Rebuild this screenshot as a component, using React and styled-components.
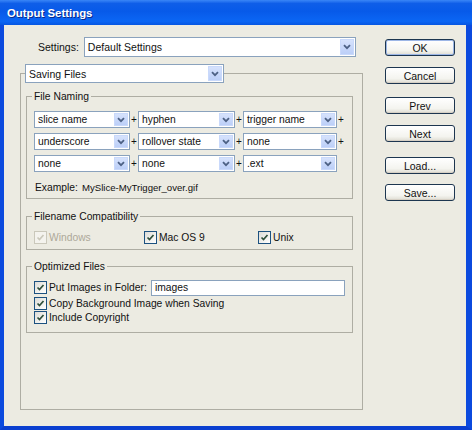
import React from 'react';
import styled, { createGlobalStyle } from 'styled-components';

const GlobalStyle = createGlobalStyle`
  html, body {
    margin: 0;
    padding: 0;
    background: #ffffff;
  }
  body {
    font-family: "Liberation Sans", Arial, sans-serif;
    font-size: 10.3px;
    font-weight: 400;
    color: #111;
  }
  * {
    font-weight: inherit;
  }
`;

const Window = styled.div`
  width: 472px;
  height: 430px;
  display: flex;
  flex-direction: column;
  overflow: hidden;
`;

const TitleBar = styled.div`
  height: 25px;
  flex: none;
  display: flex;
  align-items: center;
  padding-left: 7px;
  background: linear-gradient(#3a86f7 0%, #0f5ee8 14%, #075ae9 45%, #0b66f4 85%, #0656e2 100%);
  color: #fff;
  font-weight: 700;
  font-size: 11.4px;
  text-shadow: 1px 1px 0 #0b2a8a;
`;

const Frame = styled.div`
  flex: 1;
  display: flex;
  border-left: 4px solid #0b4ade;
  border-right: 6px solid #0b4ade;
  border-bottom: 4px solid #0a3fd0;
  background: #ecebe2;
`;

const Client = styled.div`
  flex: 1;
  display: flex;
  gap: 22px;
  padding: 12px 11px 0 16px;
`;

const LeftColumn = styled.div`
  width: 343px;
  display: flex;
  flex-direction: column;
`;

const SettingsRow = styled.div`
  display: flex;
  align-items: center;
  gap: 5px;
  padding-left: 18px;
  font-size: 10.5px;
`;

const DropBox = styled.div`
  width: ${(p) => p.$w}px;
  height: ${(p) => p.$h || 17}px;
  box-sizing: border-box;
  border: 1px solid #8aa2bd;
  background: #fff;
  display: flex;
  align-items: center;
  padding: 1px;
  font-size: ${(p) => (p.$big ? '10.5px' : '10.3px')};
`;

const DropText = styled.span`
  flex: 1;
  padding-left: 2px;
  white-space: nowrap;
  overflow: hidden;
`;

const DropArrow = styled.span`
  width: 14px;
  align-self: stretch;
  display: flex;
  align-items: center;
  justify-content: center;
  background: linear-gradient(#d6e2fc, #bccff8);
  border: 1px solid #c9d9fb;
  box-sizing: border-box;
`;

const Chevron = () => (
  <svg width="8" height="6" viewBox="0 0 8 6">
    <path d="M1 1.2 L4 4.2 L7 1.2" fill="none" stroke="#4d6185" strokeWidth="1.8" />
  </svg>
);

const Dropdown = ({ value, w, h, big }) => (
  <DropBox $w={w} $h={h} $big={big}>
    <DropText>{value}</DropText>
    <DropArrow>
      <Chevron />
    </DropArrow>
  </DropBox>
);

const OuterBox = styled.fieldset`
  margin: 7px 0 0 0;
  height: 346px;
  box-sizing: border-box;
  border: 1px solid #aeada3;
  padding: 0 9px 0 5px;
  min-width: 0;

  > legend {
    padding: 0;
    margin-left: -1px;
  }
`;

const Group = styled.fieldset`
  margin: ${(p) => p.$top}px 0 0 0;
  border: 1px solid #aeada3;
  padding: ${(p) => p.$pt}px 7px ${(p) => p.$pb}px 7px;
  min-width: 0;

  > legend {
    padding: 0 2px;
    margin-left: -2px;
    line-height: 13px;
  }
`;

const NamingGrid = styled.div`
  display: grid;
  grid-template-columns: 96px 8px 97px 8px 94px 8px;
  row-gap: 5px;
  align-items: center;
`;

const Plus = styled.span`
  text-align: center;
  font-size: 10px;
`;

const ExampleLine = styled.div`
  margin-top: 9px;
  line-height: 13px;
  padding-left: 1px;

  span {
    font-size: 9.6px;
    margin-left: 4px;
  }
`;

const CheckRow = styled.div`
  display: flex;
  align-items: center;
  height: ${(p) => p.$h || 14}px;
`;

const CheckItem = styled.div`
  display: flex;
  align-items: center;
  gap: 2px;
  width: ${(p) => (p.$w ? `${p.$w}px` : 'auto')};
  color: ${(p) => (p.$disabled ? '#aca899' : 'inherit')};
  white-space: nowrap;
`;

const Box = styled.span`
  width: 13px;
  height: 13px;
  box-sizing: border-box;
  border: 1px solid ${(p) => (p.$disabled ? '#cac8bb' : '#1c5180')};
  background: ${(p) => (p.$disabled ? '#f4f3ee' : 'linear-gradient(135deg, #dcdcd7, #ffffff)')};
  display: flex;
  align-items: center;
  justify-content: center;
  flex: none;
`;

const Check = ({ disabled }) => (
  <Box $disabled={disabled}>
    <svg width="9" height="9" viewBox="0 0 9 9">
      <path
        d="M1.5 4.5 L3.5 6.5 L7.5 2"
        fill="none"
        stroke={disabled ? '#cac8bb' : '#2f4f3a'}
        strokeWidth="1.7"
      />
    </svg>
  </Box>
);

const TextField = styled.div`
  margin-left: 4px;
  width: 195px;
  height: 16px;
  box-sizing: border-box;
  border: 1px solid #8aa2bd;
  background: #fff;
  padding-left: 3px;
  display: flex;
  align-items: center;
`;

const ButtonColumn = styled.div`
  width: 70px;
  display: flex;
  flex-direction: column;
`;

const Button = styled.button`
  margin-top: ${(p) => p.$top}px;
  height: 17px;
  padding: 0;
  border: 1px solid #1d3650;
  border-radius: 3px;
  background: linear-gradient(#ffffff, #f4f4ef 70%, #dedcd2);
  box-shadow: ${(p) => (p.$default ? 'inset 0 0 0 1px #9cb6e6' : 'inset 0 -1px 0 #d6d0c5')};
  font-family: "Liberation Sans", Arial, sans-serif;
  font-size: 10.5px;
  font-weight: 400;
  color: #111;
`;

const naming = [
  ['slice name', 'hyphen', 'trigger name', true],
  ['underscore', 'rollover state', 'none', true],
  ['none', 'none', '.ext', false],
];

const buttons = [
  ['OK', 2],
  ['Cancel', 11],
  ['Prev', 13],
  ['Next', 11],
  ['Load...', 15],
  ['Save...', 10],
];

export default function App() {
  return (
    <Window>
      <GlobalStyle />
      <TitleBar>Output Settings</TitleBar>
      <Frame>
        <Client>
          <LeftColumn>
            <SettingsRow>
              <span>Settings:</span>
              <Dropdown value="Default Settings" w={272} h={20} big />
            </SettingsRow>

            <OuterBox>
              <legend>
                <Dropdown value="Saving Files" w={199} h={19} big />
              </legend>

              <Group $top={7} $pt={8} $pb={4}>
                <legend>File Naming</legend>
                <NamingGrid>
                  {naming.map(([a, b, c, tail]) => (
                    <React.Fragment key={a + b + c}>
                      <Dropdown value={a} w={96} />
                      <Plus>+</Plus>
                      <Dropdown value={b} w={97} />
                      <Plus>+</Plus>
                      <Dropdown value={c} w={94} />
                      <Plus>{tail ? '+' : ''}</Plus>
                    </React.Fragment>
                  ))}
                </NamingGrid>
                <ExampleLine>
                  Example:<span>MySlice-MyTrigger_over.gif</span>
                </ExampleLine>
              </Group>

              <Group $top={11} $pt={8} $pb={5}>
                <legend>Filename Compatibility</legend>
                <CheckRow $h={13}>
                  <CheckItem $w={110} $disabled>
                    <Check disabled />
                    Windows
                  </CheckItem>
                  <CheckItem $w={114}>
                    <Check />
                    Mac OS 9
                  </CheckItem>
                  <CheckItem>
                    <Check />
                    Unix
                  </CheckItem>
                </CheckRow>
              </Group>

              <Group $top={10} $pt={6} $pb={8}>
                <legend>Optimized Files</legend>
                <CheckRow $h={17}>
                  <CheckItem>
                    <Check />
                    Put Images in Folder:
                  </CheckItem>
                  <TextField>images</TextField>
                </CheckRow>
                <CheckRow>
                  <CheckItem>
                    <Check />
                    Copy Background Image when Saving
                  </CheckItem>
                </CheckRow>
                <CheckRow>
                  <CheckItem>
                    <Check />
                    Include Copyright
                  </CheckItem>
                </CheckRow>
              </Group>
            </OuterBox>
          </LeftColumn>

          <ButtonColumn>
            {buttons.map(([label, top], i) => (
              <Button key={label} $top={top} $default={i === 0}>
                {label}
              </Button>
            ))}
          </ButtonColumn>
        </Client>
      </Frame>
    </Window>
  );
}
